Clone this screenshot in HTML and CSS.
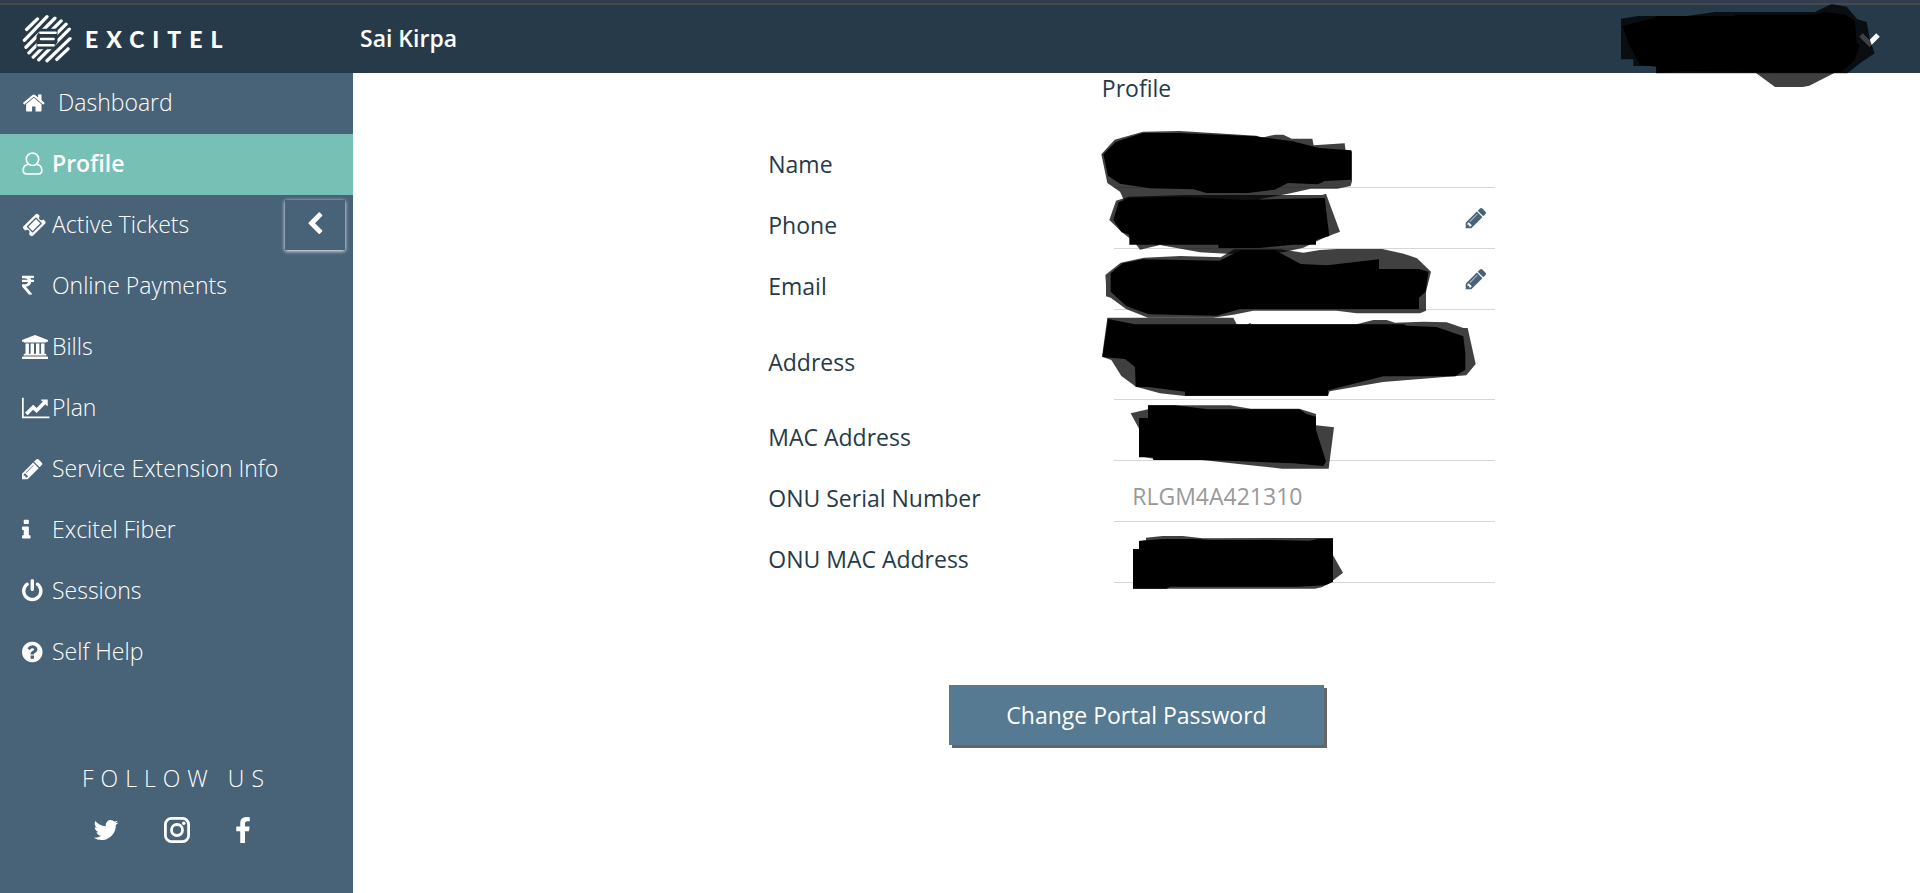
FILE: index.html
```
<!doctype html>
<html lang="en">
<head>
    <meta charset="UTF-8">
    <meta name="viewport" content="width=device-width, initial-scale=1.0">
    <title>Excitel - Profile</title>
    <link rel="stylesheet" href="styles.css">
</head>
<body>
<header class="header">
    <a href="#dashboard" class="logo">
        <svg class="logo-mark" viewBox="66 42 152 150" aria-hidden="true">
            <defs>
                <mask id="core">
                    <rect x="60" y="40" width="170" height="160" fill="#fff"/>
                    <path d="M124 86h50v40l-14 22h-50v-40z" fill="#000"/>
                </mask>
            </defs>
            <g stroke="#fff" stroke-width="10" stroke-linecap="round" fill="none">
                <g mask="url(#core)">
                    <path d="M80 88l33-32M73 121l69-72M78 142l88-88M87 159l98-97M100 172l100-100M117 180l93-93M142 183l70-67M172 179l34-32"/>
                </g>
                <path d="M122 98h46M124 117h38M116 136h46" stroke-width="8"/>
            </g>
        </svg>
        <span class="logo-text">EXCITEL</span>
    </a>
    <span class="account">Sai Kirpa</span>
    <button type="button" class="user-menu" aria-label="Account menu">
        <svg width="24" height="24" viewBox="0 0 24 24"><path d="M3 8l8.500 8.500 8.500-8.500" fill="none" stroke="#fff" stroke-width="5"/></svg>
    </button>
    <svg class="cover cover-user" viewBox="0 9 990 300" aria-hidden="true">
        <path fill-opacity=".75" d="M93 56l52-8h145l85-12h300l50-24 45 8 32 38 28 8 10 54 14 40-42 28-40 32H198v-22h-68v-20H93z"/>
        <path d="M97 78l95-24 8-6h235l1-4h240l30-8 60 8 28 18 6 66 8 10-14 42-36 34-20 4H565l-60-2-220-2-85 4v-18l-50-5-32-60z"/>
        <path fill-opacity=".75" d="M498 219h235l-75 38-20 4h-83z"/>
    </svg>
</header>
<div class="layout">
    <aside class="sidebar">
        <nav class="menu">
            <a href="#dashboard" class="menu-item home">
                <svg class="icon" viewBox="15 0 2240 1792"><path d="M1472 992v480q0 26-19 45t-45 19h-384v-384h-256v384h-384q-26 0-45-19t-19-45v-480q0-1 .5-3t.5-3l575-474 575 474q1 2 1 6zm223-69l-62 74q-8 9-21 11h-3q-13 0-21-7l-692-577-692 577q-12 8-24 7-13-2-21-11l-62-74q-8-10-7-23.500t11-21.500l719-599q32-26 76-26t76 26l244 204v-195q0-14 9-23t23-9h192q14 0 23 9t9 23v408l219 182q10 8 11 21.500t-7 23.500z"/></svg>
                Dashboard
            </a>
            <a href="#profile" class="menu-item active">
                <svg class="icon" viewBox="0 0 30 24"><path d="M6 12.500C2.500 13 1.200 16 1.200 18.500c0 2.300 1.500 3.500 3.500 3.500h11.600c2 0 3.500-1.200 3.500-3.500 0-2.500-1.300-5.500-4.800-6M10.500 1c3.600 0 6.200 2.700 6.200 6.200s-2.600 6.300-6.200 6.300-6.200-2.800-6.200-6.300S6.900 1 10.500 1z" fill="none" stroke="#fff" stroke-width="1.700"/></svg>
                Profile
            </a>
            <a href="#tickets" class="menu-item">
                <svg class="icon" viewBox="-22 0 2240 1792"><path d="M1024 452l316 316-572 572-316-316zm-211 979l618-618q19-19 19-45t-19-45l-362-362q-18-18-45-18t-45 18l-618 618q-19 19-19 45t19 45l362 362q18 18 45 18t45-18zm889-637l-907 908q-37 37-90.500 37t-90.500-37l-126-126q56-56 56-136t-56-136-136-56-136 56l-125-126q-37-37-37-90.500t37-90.500l907-906q37-37 90.500-37t90.500 37l125 125q-56 56-56 136t56 136 136 56 136-56l126 125q37 37 37 90.500t-37 90.500z"/></svg>
                Active Tickets
            </a>
            <a href="#payments" class="menu-item">
                <svg class="icon" viewBox="448 0 2240 1792"><path d="M1345 470v102q0 14-9 23t-23 9h-168q-23 144-129 234t-276 110q167 178 459 536 14 16 4 34-8 18-29 18h-195q-16 0-25-12-306-367-498-571-9-9-9-22v-127q0-13 9.500-22.500t22.500-9.500h112q132 0 212.500-43t102.500-125h-427q-14 0-23-9t-9-23v-102q0-14 9-23t23-9h413q-57-113-268-113h-145q-13 0-22.500-9.500t-9.500-22.500v-133q0-14 9-23t23-9h832q14 0 23 9t9 23v102q0 14-9 23t-23 9h-233q47 61 64 144h171q14 0 23 9t9 23z"/></svg>
                Online Payments
            </a>
            <a href="#bills" class="menu-item">
                <svg class="icon" viewBox="0 0 30 24"><path d="M13 0l13 5v1.700h-1.700c0 .6-.4.900-1 .900H2.700c-.6 0-1-.3-1-.900H0V5zM3.500 8.500h3.400v10.300h1.700V8.500H12v10.300h2V8.500h3.400v10.300h1.700V8.500h3.400v10.300h.8c.6 0 1 .4 1 .900v.800H1.700v-.8c0-.5.400-.9 1-.9h.8zM1 21.400h24c.6 0 1 .400 1 .900V24H0v-1.700c0-.5.400-.9 1-.9z"/></svg>
                Bills
            </a>
            <a href="#plan" class="menu-item">
                <svg class="icon" viewBox="0 0 2240 1792"><path d="M2048 1536v128h-2048v-1536h128v1408h1920zm-128-1248v435q0 21-19.500 29.500t-35.500-7.500l-121-121-633 633q-10 10-23 10t-23-10l-233-233-416 416-192-192 585-585q10-10 23-10t23 10l233 233 464-464-121-121q-16-16-7.500-35.500t29.500-19.500h435q14 0 23 9t9 23z"/></svg>
                Plan
            </a>
            <a href="#extension" class="menu-item">
                <svg class="icon" viewBox="128 0 2240 1792"><path id="pencil" d="M491 1536l91-91-235-235-91 91v107h128v128h107zm523-928q0-22-22-22-10 0-17 7l-542 542q-7 7-7 17 0 22 22 22 10 0 17-7l542-542q7-7 7-17zm-54-192l416 416-832 832h-416v-416zm683 96q0 53-37 90l-166 166-416-416 166-165q36-38 90-38 53 0 91 38l235 234q37 39 37 91z"/></svg>
                Service Extension Info
            </a>
            <a href="#fiber" class="menu-item">
                <svg class="icon" viewBox="576 0 2240 1792"><path d="M1216 1344v128q0 26-19 45t-45 19h-512q-26 0-45-19t-19-45v-128q0-26 19-45t45-19h64v-384h-64q-26 0-45-19t-19-45v-128q0-26 19-45t45-19h384q26 0 45 19t19 45v576h64q26 0 45 19t19 45zm-128-1152v192q0 26-19 45t-45 19h-256q-26 0-45-19t-19-45v-192q0-26 19-45t45-19h256q26 0 45 19t19 45z"/></svg>
                Excitel Fiber
            </a>
            <a href="#sessions" class="menu-item">
                <svg class="icon" viewBox="128 0 2240 1792"><path d="M1664 896q0 156-61 298t-164 245-245 164-298 61-298-61-245-164-164-245-61-298q0-182 80.500-343t226.500-270q43-32 95.500-25t83.500 50q32 42 24.500 94.500t-49.500 84.500q-98 74-151.500 181t-53.500 228q0 104 40.500 198.500t109.500 163.500 163.500 109.500 198.500 40.500 198.500-40.500 163.500-109.500 109.500-163.500 40.500-198.500q0-121-53.500-228t-151.500-181q-42-32-49.500-84.500t24.500-94.500q31-43 84-50t95 25q146 109 226.500 270t80.500 343zm-640-768v640q0 52-38 90t-90 38-90-38-38-90v-640q0-52 38-90t90-38 90 38 38 90z"/></svg>
                Sessions
            </a>
            <a href="#help" class="menu-item">
                <svg class="icon" viewBox="128 0 2240 1792"><path d="M1024 1376v-192q0-14-9-23t-23-9h-192q-14 0-23 9t-9 23v192q0 14 9 23t23 9h192q14 0 23-9t9-23zm256-672q0-88-55.500-163t-138.500-116-170-41q-243 0-371 213-15 24 8 42l132 100q7 6 19 6 16 0 25-12 53-68 86-92 34-24 86-24 48 0 85.500 26t37.500 59q0 38-20 61t-68 45q-63 28-115.500 86.500t-52.500 125.500v36q0 14 9 23t23 9h192q14 0 23-9t9-23q0-19 21.500-49.500t54.500-49.500q32-18 49-28.500t46-35 44.500-48 28-60.500 12.500-81zm384 192q0 209-103 385.500t-279.500 279.500-385.500 103-385.500-103-279.500-279.500-103-385.500 103-385.500 279.500-279.500 385.500-103 385.500 103 279.500 279.500 103 385.500z"/></svg>
                Self Help
            </a>
        </nav>
        <button type="button" class="collapse" aria-label="Collapse menu">
            <svg width="24" height="24" viewBox="0 0 1792 1792"><path d="M1427 301l-531 531 531 531q19 19 19 45t-19 45l-166 166q-19 19-45 19t-45-19l-742-742q-19-19-19-45t19-45l742-742q19-19 45-19t45 19l166 166q19 19 19 45t-19 45z"/></svg>
        </button>
        <div class="follow">
            <p class="follow-title">FOLLOW US</p>
            <div class="social">
                <a href="#twitter" aria-label="Twitter">
                    <svg width="26" height="28" viewBox="64 0 1664 1792"><path d="M1684 408q-67 98-162 167 1 14 1 42 0 130-38 259.500t-115.500 248.500-184.500 210.500-258 146-323 54.500q-271 0-496-145 35 4 78 4 225 0 401-138-105-2-188-64.500t-114-159.500q33 5 61 5 43 0 85-11-112-23-185.500-111.500t-73.500-205.500v-4q68 38 146 41-66-44-105-115t-39-154q0-88 44-163 121 149 294.500 238.500t371.500 99.500q-8-38-8-74 0-134 94.500-228.500t228.500-94.500q140 0 236 102 109-21 205-78-37 115-142 178 93-10 186-50z"/></svg>
                </a>
                <a href="#instagram" aria-label="Instagram">
                    <svg width="26" height="28" viewBox="0 0 26 28"><rect x="1.400" y="2.400" width="23.200" height="23.200" rx="6" fill="none" stroke="#fff" stroke-width="2.800"/><circle cx="13" cy="14" r="5.500" fill="none" stroke="#fff" stroke-width="2.800"/><circle cx="19.800" cy="7.200" r="1.700"/></svg>
                </a>
                <a href="#facebook" aria-label="Facebook">
                    <svg width="16" height="28" viewBox="399 -64 1024 1792"><path d="M1343 12v264h-157q-86 0-116 36t-30 108v189h293l-39 296h-254v759h-306v-759h-255v-296h255v-218q0-186 104-288.500t277-102.500q147 0 228 12z"/></svg>
                </a>
            </div>
        </div>
    </aside>
    <main class="content">
        <h1 class="title">Profile</h1>
        <form class="form">
            <div class="row">
                <label for="name">Name</label>
                <div class="field">
                    <input type="text" id="name" readonly>
                    <svg class="cover" viewBox="0 198 1320 300" aria-hidden="true">
                        <path fill-opacity=".75" d="M64 280l40-44 85-24 110-2 230 14 16 6 40-9h25l25 12h62l4 20 93-6 3 24h19v90l-4 14-40 8h-80l-60 14-90 17-60 34-150 14H190l-44-14-26-56-38-26z"/>
                        <path d="M70 280l38-38 80-26h110l228 10 112 15 80 20 96 7v88l-80 4-20 10-90-4-40 20-80 10H380l-40-11-130-3-90-14-36-24z"/>
                    </svg>
                </div>
            </div>
            <div class="row">
                <label for="phone">Phone</label>
                <div class="field">
                    <input type="text" id="phone" readonly>
                    <button type="button" class="edit" aria-label="Edit phone"><svg width="24" height="24" viewBox="0 0 1792 1792"><use href="#pencil"/></svg></button>
                    <svg class="cover" viewBox="0 384 1320 300" aria-hidden="true">
                        <path fill-opacity=".75" d="M88 480l20-58 38-12 170-5h410l12-4 42 114-48 18-62 30-60 14-90 4H440l-80-4-120-22-60 14-16-22-38-30z"/>
                        <path d="M100 480l16-54 34-12 160-4 180 10 245-6 3 34 10 80-40 12v14h-70l-100 10H415v-10H148v-30l-24-8z"/>
                    </svg>
                </div>
            </div>
            <div class="row">
                <label for="email">Email</label>
                <div class="field">
                    <input type="text" id="email" readonly>
                    <button type="button" class="edit" aria-label="Edit email"><svg width="24" height="24" viewBox="0 0 1792 1792"><use href="#pencil"/></svg></button>
                    <svg class="cover" viewBox="0 567 1320 300" aria-hidden="true">
                        <path fill-opacity=".75" d="M76 645l46-37 70-15 110-5 120 4 40-24h140l68 10 50-8 50-3h137l64 14 40 14 42 40-15 60v57l-18 8H830l-60-8H520l-60 12-60 9H204l-66-26-46-34-14-4v-36z"/>
                        <path d="M92 640l36-30 60-12 230 4 66-32h100l78 42 80 4 155-18v29h120l28 8-8 60-20 18v34H480l-70 20-204-4-66-24-48-44z"/>
                    </svg>
                </div>
            </div>
            <div class="row tall">
                <label for="address">Address</label>
                <div class="field">
                    <input type="text" id="address" readonly>
                    <svg class="cover" viewBox="0 33 1320 300" aria-hidden="true">
                        <path fill-opacity=".75" d="M82 56h378l10 20h360l50-13h40l25 8 85-3 70 2 50 17h13l24 108-28 34-250 20-160 28-5 14H315l-75-8-72-20-44-32-30-48-28-10z"/>
                        <path d="M84 60l80 16 340 0 8-4v4h460l8 4 90 4 80 28 6 52 0 48-30 20H910l-166 42v16H315v-12l-110-14h-38l-2-60-30-24-68-6z"/>
                    </svg>
                </div>
            </div>
            <div class="row">
                <label for="mac">MAC Address</label>
                <div class="field">
                    <input type="text" id="mac" readonly>
                    <svg class="cover" viewBox="0 300 1320 300" aria-hidden="true">
                        <path fill-opacity=".75" d="M152 340l52-12v-12h246l62 10h146l50 16v34l54 6-16 124H606l-130-14-110-12H238l-60-12v-80z"/>
                        <path d="M204 316h80l100 12h275l20 14 29 8v40l30 94-8 14-90-8-250-10H220l-2-8h-41V354h27z"/>
                    </svg>
                </div>
            </div>
            <div class="row">
                <label for="onu-serial">ONU Serial Number</label>
                <div class="field">
                    <input type="text" id="onu-serial" value="RLGM4A421310" readonly>
                </div>
            </div>
            <div class="row">
                <label for="onu-mac">ONU MAC Address</label>
                <div class="field">
                    <input type="text" id="onu-mac" readonly>
                    <svg class="cover" viewBox="0 669 1320 300" aria-hidden="true">
                        <path fill-opacity=".75" d="M198 724v-8l50-5h60l60 7 202-1h189v52l30 52-44 34-20 10-20 4H159V750h18v-24z"/>
                        <path d="M177 726l70-6h100l50 3h170l120 2 30-6h42v130l-24 10-80 4H270l-10 6H159V750h18z"/>
                    </svg>
                </div>
            </div>
        </form>
        <button type="button" class="change-password">Change Portal Password</button>
    </main>
</div>
</body>
</html>
```
FILE: styles.css
```
* {
    box-sizing: border-box;
}

body {
    margin: 0;
    min-height: 100vh;
    display: flex;
    flex-direction: column;
    font-family: "Open Sans", "Noto Sans", sans-serif;
    font-size: 23px;
    line-height: 31px;
    color: #263a49;
    background: #fff;
}

a {
    color: #fff;
    text-decoration: none;
}

button, input {
    font: inherit;
}

button {
    border: 0;
    padding: 0;
    background: none;
    cursor: pointer;
}

svg {
    display: block;
    fill: currentColor;
}

.header {
    position: relative;
    z-index: 2;
    height: 73px;
    display: flex;
    align-items: center;
    padding: 2px 38px 0 22px;
    border-top: 3px solid #343c50;
    box-shadow: inset 0 2px #464a4f;
    background: #263a49;
    color: #fff;
}

.logo {
    width: 338px;
    display: flex;
    align-items: center;
    gap: 13px;
}

.logo-mark {
    width: 50px;
    height: 50px;
}

.logo-text {
    font-family: Lato, sans-serif;
    font-size: 23px;
    font-weight: 900;
    letter-spacing: 8px;
}

.account {
    padding-bottom: 2px;
    font-weight: 600;
}

.user-menu {
    margin-left: auto;
    color: #fff;
}

.layout {
    flex: 1;
    display: flex;
}

.sidebar {
    position: relative;
    width: 353px;
    flex-shrink: 0;
    background: #486278;
    color: #fff;
}

.menu-item {
    height: 61px;
    display: flex;
    align-items: center;
    padding: 0 0 2px 22px;
    font-weight: 300;
}

.menu-item.home .icon {
    margin-right: 6px;
}

.menu-item.active {
    background: #76c0b6;
    font-weight: 600;
}

.icon {
    width: 30px;
    height: 24px;
    overflow: visible;
}

/* floats over the menu */
.collapse {
    position: absolute;
    top: 127px;
    right: 8px;
    width: 60px;
    height: 50px;
    display: flex;
    align-items: center;
    justify-content: center;
    padding-bottom: 2px;
    background: #486278;
    box-shadow: 0 1px 4px #fff;
    color: #fff;
}

.follow {
    padding-top: 80px;
    text-align: center;
}

.follow-title {
    margin: 0;
    font-weight: 300;
    letter-spacing: 7px;
}

.social {
    display: flex;
    justify-content: center;
    gap: 45px;
    padding: 22px 9px 0 0;
}

.content {
    flex: 1;
    display: flex;
    flex-direction: column;
    align-items: center;
}

.title {
    margin: 0;
    font-size: 23px;
    font-weight: 400;
}

.form {
    width: 47%;
    min-width: 720px;
    padding: 23px 10px 0 0;
}

.row {
    display: flex;
    height: 61px;
}

.row.tall {
    height: 90px;
}

.row label {
    width: 346px;
    display: flex;
    align-items: center;
    padding-top: 14px;
}

.field {
    position: relative;
    flex: 1;
    display: flex;
    border-bottom: 1px solid #d6d6d6;
}

.field input {
    flex: 1;
    min-width: 0;
    border: 0;
    outline: 0;
    padding: 11px 18px 0;
    background: none;
    color: #999;
}

.edit {
    width: 31px;
    color: #486278;
}

/* blacked out values */
.cover {
    position: absolute;
    top: 0;
    left: -34px;
    width: 440px;
    height: 100px;
    overflow: visible;
    fill: #000;
    pointer-events: none;
}

.cover-user {
    left: auto;
    right: 0;
    width: 330px;
}

.change-password {
    width: 375px;
    height: 60px;
    margin-top: 102px;
    background: #567a91;
    box-shadow: 3px 3px #666;
    color: #fff;
}
```
